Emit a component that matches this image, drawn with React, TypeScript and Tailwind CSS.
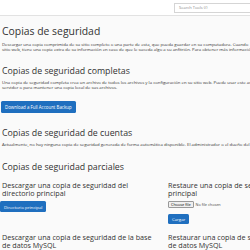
import React from "react";

export default function App() {
  const font = { fontFamily: '"Open Sans", "Liberation Sans", sans-serif' };
  return (
    <div className="w-[250px] h-[250px] overflow-hidden bg-[#fafafa] text-[#333]" style={font}>
      <div className="h-[16px] bg-white border-b border-[#e2e2e2] flex items-center justify-end">
        <div className="w-[80px] h-[10px] mr-[-4px] border border-[#d5d5d5] bg-white flex items-center pl-[4px] text-[4px] text-[#888] leading-none">
          Search Tools (/)
        </div>
      </div>
      <div className="px-[2px] w-[480px]">
        <h1 className="text-[10.4px] leading-[14px] mt-[8px] font-normal">Copias de seguridad</h1>
        <p className="text-[4.3px] leading-[5.3px] mt-[4px] w-[248px] whitespace-nowrap">
          Descargar una copia comprimida de su sitio completo o una parte de esta, que pueda guardar en su computadora. Cuando
          <br />
          sitio web, tiene una copia extra de su información en caso de que le suceda algo a su anfitrión. Para obtener más información, consulte la documentación.
        </p>
        <h2 className="text-[8.8px] leading-[13px] mt-[12px]">Copias de seguridad completas</h2>
        <p className="text-[4.3px] leading-[5.3px] mt-[2px] whitespace-nowrap">
          Una copia de seguridad completa crea un archivo de todos los archivos y la configuración en su sitio web. Puede usar este archivo para mover su cuenta a otro
          <br />
          servidor o para mantener una copia local de sus archivos.
        </p>
        <button className="block mt-[11px] ml-[-1px] h-[12px] px-[4px] bg-[#1f6fbf] rounded-[1.5px] text-white text-[4.4px] leading-none">
          Download a Full Account Backup
        </button>
        <h2 className="text-[8.8px] leading-[13px] mt-[14px]">Copias de seguridad de cuentas</h2>
        <p className="text-[4.3px] leading-[5.3px] mt-[2px] whitespace-nowrap">
          Actualmente, no hay ninguna copia de seguridad generada de forma automática disponible. El administrador o el dueño del servidor puede configurarlas.
        </p>
        <h2 className="text-[8.8px] leading-[13px] mt-[14px]">Copias de seguridad parciales</h2>
        <div className="grid grid-cols-[166px_160px] mt-[7px]">
          <div>
            <h3 className="text-[7.2px] leading-[8px] w-[157px]">Descargar una copia de seguridad del directorio principal</h3>
            <button className="block mt-[4px] ml-[-2px] h-[11px] px-[4px] bg-[#1f6fbf] rounded-[1.5px] text-white text-[4.3px] leading-none">
              Directorio principal
            </button>
            <h3 className="text-[7.2px] leading-[8px] w-[157px] mt-[21px]">Descargar una copia de seguridad de la base de datos MySQL</h3>
          </div>
          <div>
            <h3 className="text-[7.2px] leading-[8px] w-[157px]">Restaure una copia de seguridad del directorio principal</h3>
            <div className="mt-[4px] flex items-center gap-[2px] h-[7px]">
              <span className="h-[7px] px-[2px] border border-[#999] bg-[#efefef] rounded-[1px] text-[3.8px] leading-[5px] text-black">Choose file</span>
              <span className="text-[3.8px] text-[#444]">No file chosen</span>
            </div>
            <button className="block mt-[6px] h-[10px] px-[4px] bg-[#1f6fbf] rounded-[1.5px] text-white text-[4.3px] leading-none">
              Cargar
            </button>
            <h3 className="text-[7.2px] leading-[8px] w-[157px] mt-[9px]">Restaurar una copia de seguridad de la base de datos MySQL</h3>
          </div>
        </div>
      </div>
    </div>
  );
}
